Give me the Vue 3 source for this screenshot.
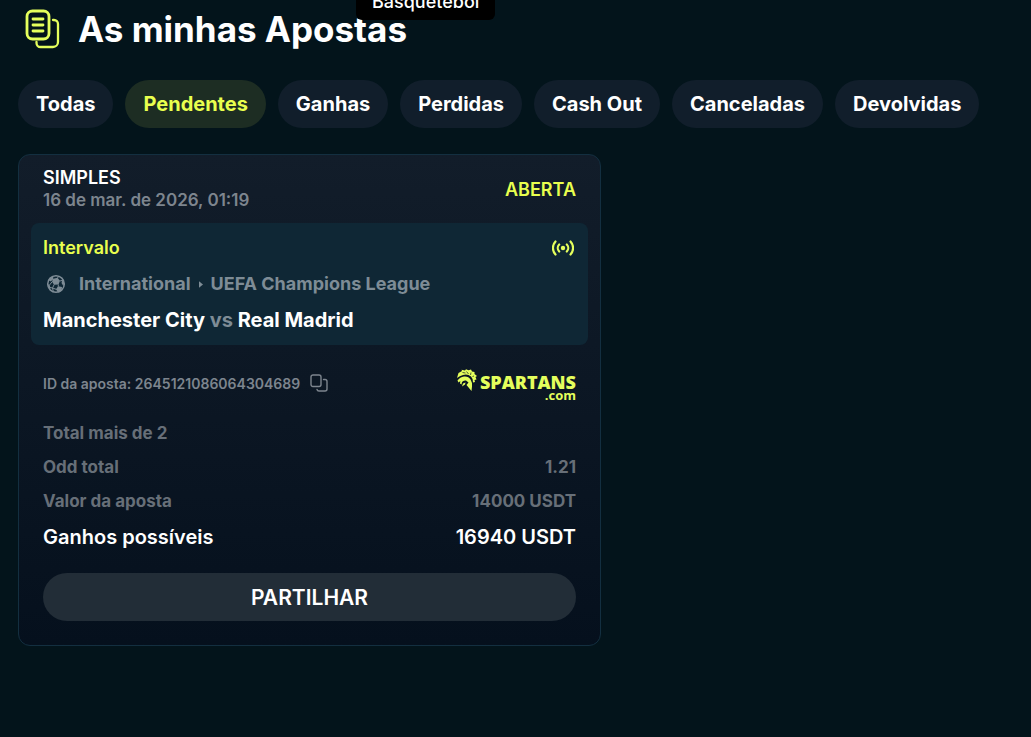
<script setup>
import { ref } from 'vue'

const tabs = ['Todas', 'Pendentes', 'Ganhas', 'Perdidas', 'Cash Out', 'Canceladas', 'Devolvidas']
const active = ref('Pendentes')
</script>

<template>
  <main class="page">
    <div class="tooltip" role="tooltip">Basquetebol</div>

    <header class="heading">
      <svg class="heading-icon" viewBox="0 0 36 40" fill="none" stroke="currentColor" stroke-linecap="round" stroke-linejoin="round" aria-hidden="true">
        <rect x="3" y="2" width="22" height="28" rx="5.5" stroke-width="2.8" />
        <path d="M9 10h10M9 16h10M9 22h10" stroke-width="2.8" />
        <path d="M29 11h1a4 4 0 0 1 4 4v18a5 5 0 0 1-5 5H16.500a4 4 0 0 1-4-4v-1" stroke-width="2.300" />
      </svg>
      <h1>As minhas Apostas</h1>
    </header>

    <nav class="tabs" aria-label="Apostas">
      <button
        v-for="tab in tabs"
        :key="tab"
        type="button"
        class="tab"
        :class="{ active: tab === active }"
        @click="active = tab"
      >{{ tab }}</button>
    </nav>

    <article class="card">
      <header class="card-head">
        <div>
          <div class="kind">SIMPLES</div>
          <time class="date" datetime="2026-03-16T01:19">16 de mar. de 2026, 01:19</time>
        </div>
        <strong class="status">ABERTA</strong>
      </header>

      <section class="event">
        <div class="event-row">
          <span class="period">Intervalo</span>
          <svg class="live" viewBox="0 0 22 16" fill="none" stroke="currentColor" stroke-width="2.200" stroke-linecap="round" aria-hidden="true">
            <circle cx="11" cy="8" r="2.200" fill="currentColor" stroke="none" />
            <path d="M7.200 4.500a5 5 0 0 0 0 7M14.800 4.500a5 5 0 0 1 0 7M3.500 1.500a9.500 9.500 0 0 0 0 13M18.500 1.500a9.500 9.500 0 0 1 0 13" />
          </svg>
        </div>
        <div class="league">
          <svg class="ball" viewBox="0 0 20 20" aria-hidden="true">
            <circle cx="10" cy="10" r="8.300" fill="none" stroke="currentColor" stroke-width="1.500" />
            <path d="M7.200 4.800l4.300-1 2.500 3-1.500 3.700-4.500.3-2-3.200zM2.500 6l2.800-3.200 2 .2-.2 2.300-2.300 2.200zM1.700 10l2.300 1.500.3 3.500-1.500-.5zM12 12.300l4 .7-.5 4-3.500 1.500-2-3.200zM16.500 5l1.800 4-1 3-1.800-3z" fill="currentColor" />
            <path d="M11.500 4l1.500-2M14 7l2.800-.8M12.300 10.500v2M8.200 10.500l-1.700 3.500-2.500-.5M6.500 14l.8 3.500M6.200 7.700L3.500 11M10.700 15.500l-4.200-1.500" fill="none" stroke="currentColor" />
          </svg>
          <span>International</span>
          <svg class="caret" viewBox="0 0 5 8" aria-hidden="true"><path d="M0 0l5 4-5 4z" fill="currentColor" /></svg>
          <span>UEFA Champions League</span>
        </div>
        <h2 class="teams">Manchester City <span>vs</span> Real Madrid</h2>
      </section>

      <div class="ident">
        <div class="bet-id">
          <span>ID da aposta: 2645121086064304689</span>
          <button type="button" class="copy" aria-label="Copiar">
            <svg viewBox="0 0 18 18" fill="none" stroke="currentColor" stroke-width="1.400" stroke-linecap="round">
              <rect x="1" y="1" width="10" height="11.500" rx="2" />
              <path d="M13.500 5.500h1.500a2 2 0 0 1 2 2v7.500a2 2 0 0 1-2 2H9a2 2 0 0 1-2-1.500" />
            </svg>
          </button>
        </div>
        <div class="brand">
          <svg class="helmet" viewBox="0 0 20 22" fill="currentColor" aria-hidden="true">
            <path d="M0 9L1.500 4 5 2 4.500.8 8 1.500 9 .3l2.500 1L14 .5l1 2 2.500.5v2L20 7l-1.500 1 1 2.500-2 .5.500 2-2 .5Q16.500 10 14 7.500 10.500 4.500 6 6 2.500 7 0 9z" />
            <path d="M.5 11.500Q3 8 7 7.500q4.500-.5 6.500 3 2 3 1.500 7L14.500 22 9.500 16l2-2.500L9 11.500q-2.500-.5-4 1.500l-.5 2.500L3 14.500l.3-2.500-1.800 1.500z" />
            <path d="M5 17.500l1-3 2.500-1-.5 2z" />
            <path d="M5.500 3.500l3 .5M9.500 2.500l2 2.500M14 3.500l-.5 2.500M17 7l-1.500.5" fill="none" stroke="#0c1824" stroke-width=".7" />
          </svg>
          <div class="wordmark">
            <span class="word">SPARTANS</span>
            <span class="domain">.com</span>
          </div>
        </div>
      </div>

      <dl class="summary">
        <div><dt>Total mais de 2</dt><dd></dd></div>
        <div><dt>Odd total</dt><dd>1.21</dd></div>
        <div><dt>Valor da aposta</dt><dd>14000 USDT</dd></div>
        <div class="payout"><dt>Ganhos possíveis</dt><dd>16940 USDT</dd></div>
      </dl>

      <button type="button" class="share">PARTILHAR</button>
    </article>
  </main>
</template>

<style>
html { background: #03141b; }
body { margin: 0; }
</style>

<style scoped>
.page {
  position: relative;
  box-sizing: border-box;
  min-height: 100vh;
  padding: 8px 18px 24px;
  overflow: hidden;
  background: #03141b;
  color: #fff;
  font-family: Inter, "Liberation Sans", sans-serif;
  font-weight: 600;
}
button { font: inherit; color: inherit; border: 0; cursor: pointer; }
.tooltip {
  position: absolute;
  top: -16px;
  left: 356px;
  padding: 6px 16px;
  border-radius: 6px;
  background: #000;
  font-size: 18px;
  font-weight: 500;
  line-height: 24px;
}
.heading { display: flex; align-items: center; gap: 18px; height: 42px; padding-left: 6px; }
.heading-icon { width: 36px; height: 40px; color: #e5ff5c; }
h1 { margin: 0; font-size: 35px; font-weight: 700; line-height: 42px; }
.tabs { display: flex; flex-wrap: wrap; gap: 12px; margin-top: 30px; }
.tab {
  height: 48px;
  padding: 0 18px;
  border-radius: 24px;
  background: #111e2b;
  font-size: 20px;
  font-weight: 700;
  white-space: nowrap;
}
.tab.active { background: #1d2d23; color: #e9ff4e; }
.card {
  box-sizing: border-box;
  width: 100%;
  max-width: 583px;
  margin-top: 26px;
  padding: 12px 12px 24px;
  border: 1px solid #132f40;
  border-radius: 12px;
  background: linear-gradient(#121d2a, #05101d);
}
.card-head { display: flex; justify-content: space-between; align-items: center; padding: 0 12px; }
.kind { font-size: 18px; line-height: 22px; }
.date { display: block; color: #7d858e; font-size: 17px; line-height: 22px; }
.status { color: #e9ff4e; font-size: 18px; font-weight: 600; }
.event { margin-top: 12px; padding: 12px; border-radius: 8px; background: #0f2735; }
.event-row { display: flex; justify-content: space-between; align-items: center; padding-right: 2px; line-height: 26px; }
.period { color: #e9ff4e; font-size: 18px; }
.live { width: 22px; height: 16px; color: #e5ff5c; }
.league { display: flex; align-items: center; margin-top: 10px; color: #7e8c96; font-size: 18px; font-weight: 700; line-height: 26px; }
.ball { width: 20px; height: 20px; margin: 0 13px 0 3px; }
.caret { width: 4px; height: 7px; margin: 0 8px; }
.teams { margin: 10px 0 0; font-size: 20px; font-weight: 700; line-height: 26px; }
.teams span { color: #7e8c96; }
.ident { display: flex; justify-content: space-between; align-items: center; height: 36px; margin: 20px 12px 0; }
.bet-id { display: flex; align-items: center; gap: 10px; color: #7d858e; font-size: 14px; }
.copy { display: flex; padding: 0; background: none; }
.copy svg { width: 18px; height: 18px; }
.brand { display: flex; align-items: flex-start; gap: 3px; color: #e5ff5c; }
.helmet { width: 20px; height: 22px; margin-top: 1px; }
.wordmark { display: flex; flex-direction: column; align-items: flex-end; padding-top: 5px; font-family: "Open Sans", sans-serif; }
.word { font-size: 18px; font-weight: 800; line-height: 18px; }
.domain { font-size: 13px; font-weight: 700; line-height: 8px; }
.summary { margin: 15px 12px 0; color: #676f78; font-size: 17px; font-weight: 700; line-height: 34px; }
.summary div { display: flex; justify-content: space-between; }
.summary dd { margin: 0; }
.summary .payout { color: #fff; font-size: 20px; font-weight: 600; line-height: 38px; }
.share {
  display: block;
  width: calc(100% - 24px);
  height: 48px;
  margin: 17px 12px 0;
  border-radius: 24px;
  background: #222d37;
  font-size: 21px;
}
</style>
